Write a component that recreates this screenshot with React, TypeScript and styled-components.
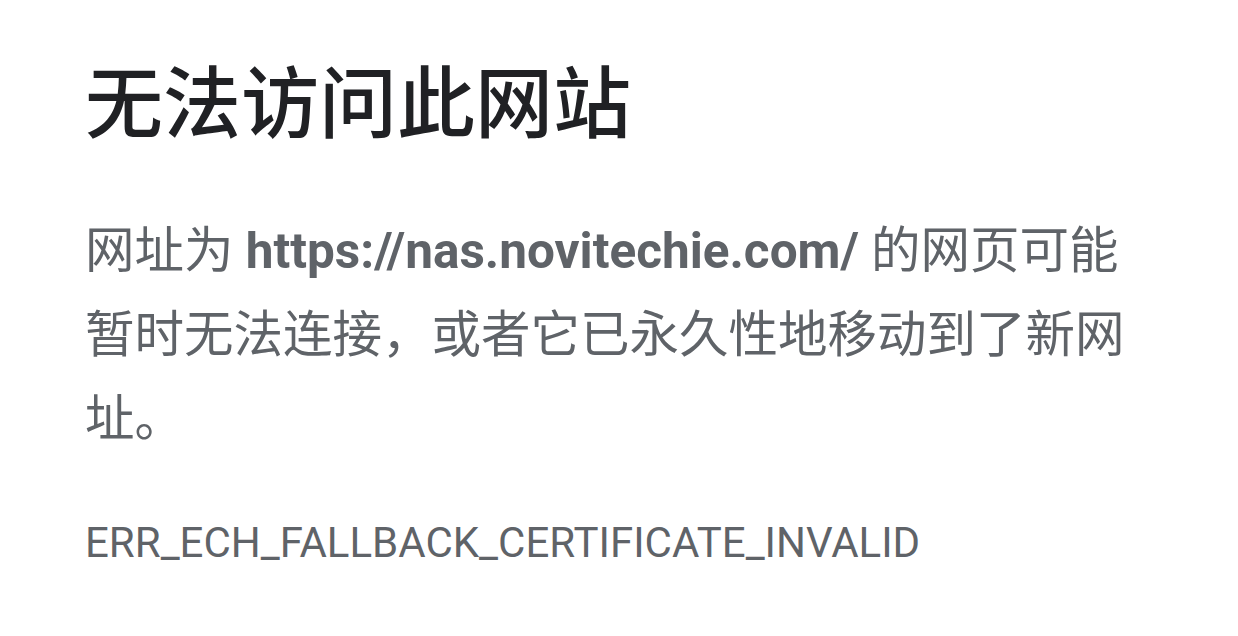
import styled, { createGlobalStyle } from 'styled-components';

const GlobalStyle = createGlobalStyle`
  html, body {
    margin: 0;
    padding: 0;
    background: #ffffff;
  }
  body {
    font-family: Roboto, 'Noto Sans CJK SC', sans-serif;
  }
`;

const Wrapper = styled.main`
  box-sizing: border-box;
  width: 100%;
  padding: 57px 85px 0;
`;

const Heading = styled.h1`
  margin: 0;
  font-size: 78px;
  line-height: 98px;
  font-weight: 500;
  color: #202124;
`;

const Message = styled.p`
  margin: 54px 0 0;
  font-size: 49.5px;
  line-height: 84px;
  color: #5f6368;
`;

const Url = styled.strong`
  font-weight: 700;
`;

const ErrorCode = styled.div`
  margin-top: 52px;
  font-size: 42px;
  line-height: 60px;
  color: #5f6368;
`;

const App = () => {
  return (
    <>
      <GlobalStyle />
      <Wrapper>
        <Heading>无法访问此网站</Heading>
        <Message>
          网址为 <Url>https://nas.novitechie.com/</Url> 的网页可能暂时无法连接，或者它已永久性地移动到了新网址。
        </Message>
        <ErrorCode>ERR_ECH_FALLBACK_CERTIFICATE_INVALID</ErrorCode>
      </Wrapper>
    </>
  );
};

export default App;
